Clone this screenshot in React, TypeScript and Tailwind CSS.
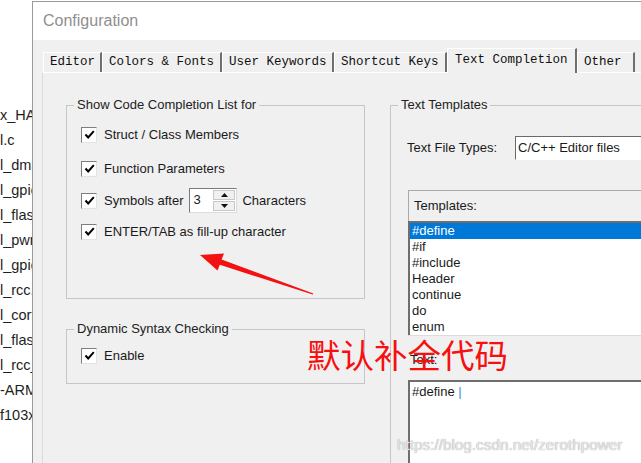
import React from 'react';

const files = [
  'x_HAL_Driver',
  'l.c',
  'l_dma.c',
  'l_gpio.c',
  'l_flash.c',
  'l_pwr.c',
  'l_gpio_ex.c',
  'l_rcc.c',
  'l_cortex.c',
  'l_flash_ex.c',
  'l_rcc_ex.c',
  '-ARM',
  'f103xb.s',
];

const tabs = [
  { label: 'Editor', width: 'w-[59px]' },
  { label: 'Colors & Fonts', width: 'w-[120px]' },
  { label: 'User Keywords', width: 'w-[112px]' },
  { label: 'Shortcut Keys', width: 'w-[113px]' },
  { label: 'Text Completion', width: 'w-[130px]', active: true },
  { label: 'Other', width: 'w-[58px]' },
];

const templates = ['#define', '#if', '#include', 'Header', 'continue', 'do', 'enum'];

function CheckBox() {
  return (
    <span className="flex h-[16px] w-[16px] shrink-0 items-center justify-center border border-t-[#7e7e7e] border-l-[#7e7e7e] border-r-[#e3e3e3] border-b-[#e3e3e3] bg-white">
      <svg width="11" height="10" viewBox="0 0 11 10">
        <path d="M1.5 4.5 L4.2 7.5 L9.8 1.2" fill="none" stroke="#000" strokeWidth="2" />
      </svg>
    </span>
  );
}

function Option({ children }: { children: React.ReactNode }) {
  return (
    <div className="flex h-[24px] items-center">
      <CheckBox />
      <span className="ml-[7px]">{children}</span>
    </div>
  );
}

function Spinner() {
  return (
    <div className="ml-[6px] flex h-[25px] w-[48px] border border-t-[#7a7a7a] border-l-[#7a7a7a] border-r-[#dcdcdc] border-b-[#dcdcdc] bg-white">
      <span className="flex-1 pl-[3px] leading-[22px]">3</span>
      <div className="my-px mr-px flex w-[22px] flex-col gap-px">
        <span className="flex flex-1 items-center justify-center border border-[#c8c8c8] bg-[#f0f0f0]">
          <svg width="7" height="4" viewBox="0 0 7 4"><path d="M3.5 0 L7 4 L0 4 Z" fill="#111" /></svg>
        </span>
        <span className="flex flex-1 items-center justify-center border border-[#c8c8c8] bg-[#f0f0f0]">
          <svg width="7" height="4" viewBox="0 0 7 4"><path d="M0 0 L7 0 L3.5 4 Z" fill="#111" /></svg>
        </span>
      </div>
    </div>
  );
}

export default function App() {
  return (
    <div className="relative flex h-[463px] w-[641px] overflow-hidden bg-white font-['Liberation_Sans',Arial,sans-serif] text-[13px] text-[#1a1a1a]">
      {/* project tree peeking out on the left */}
      <div className="w-[32px] shrink-0 overflow-hidden pt-[103px] text-[14.5px] text-[#1e1e1e]">
        {files.map((f, i) => (
          <div key={i} className="h-[25px] whitespace-nowrap leading-[25px]">
            {f}
          </div>
        ))}
      </div>

      <div className="mt-px flex min-h-0 flex-1 flex-col overflow-hidden border-l border-t border-[#9a9a9a]">
        <div className="flex h-[38px] shrink-0 items-center bg-white pl-[10px] text-[16px] text-[#8f8f8f]">
          Configuration
        </div>

        <div className="flex min-h-0 flex-1 flex-col overflow-hidden bg-[#f0f0f0] pl-[9px] pt-[8px]">
          {/* tabs */}
          <div className="flex h-[24px] shrink-0 items-end pl-px font-['Liberation_Mono',monospace] text-[12.5px] text-[#111]">
            {tabs.map((t) =>
              t.active ? (
                <div
                  key={t.label}
                  className={`relative z-10 -mb-px flex h-[25px] shrink-0 items-start border-l border-t border-r-2 border-l-white border-t-white border-r-[#6f6f6f] bg-[#f0f0f0] pl-[7px] pt-[2px] ${t.width}`}
                >
                  {t.label}
                </div>
              ) : (
                <div
                  key={t.label}
                  className={`flex h-[20px] shrink-0 items-center border-l border-t border-r-2 border-l-white border-t-white border-r-[#6f6f6f] bg-[#f0f0f0] pl-[6px] ${t.width}`}
                >
                  {t.label}
                </div>
              ),
            )}
          </div>

          {/* tab page */}
          <div className="flex min-h-0 flex-1 border-l border-t border-l-[#dadada] border-t-white">
            <div className="ml-[23px] mt-[24px] flex w-[299px] shrink-0 flex-col">
              <fieldset className="h-[202px] shrink-0 border border-[#c6c6c6]">
                <legend className="ml-[7px] px-[3px] leading-[16px] text-[#222]">Show Code Completion List for</legend>
                <div className="pl-[14px]">
                  <div className="mt-[10px]">
                    <Option>Struct / Class Members</Option>
                  </div>
                  <div className="mt-[10px]">
                    <Option>Function Parameters</Option>
                  </div>
                  <div className="mt-[7px] flex h-[25px] items-center">
                    <CheckBox />
                    <span className="ml-[7px]">Symbols after</span>
                    <Spinner />
                    <span className="ml-[5px]">Characters</span>
                  </div>
                  <div className="mt-[7px]">
                    <Option>ENTER/TAB as fill-up character</Option>
                  </div>
                </div>
              </fieldset>

              <fieldset className="mt-[22px] h-[63px] shrink-0 border border-[#c6c6c6]">
                <legend className="ml-[7px] px-[3px] leading-[16px] text-[#222]">Dynamic Syntax Checking</legend>
                <div className="mt-[7px] pl-[14px]">
                  <Option>Enable</Option>
                </div>
              </fieldset>
            </div>

            <fieldset className="ml-[25px] mt-[24px] h-[420px] w-[300px] shrink-0 border border-[#c6c6c6]">
              <legend className="ml-[7px] px-[3px] leading-[16px] text-[#222]">Text Templates</legend>
              <div className="pl-[16px]">
                <div className="mt-[23px] flex h-[24px] items-center">
                  <span className="w-[108px] shrink-0">Text File Types:</span>
                  <div className="flex h-[24px] flex-1 items-center border border-t-[#6a6a6a] border-l-[#6a6a6a] border-r-white border-b-white bg-white pl-[2px]">
                    C/C++ Editor files
                  </div>
                </div>

                <div className="ml-px mt-[30px] flex h-[31px] items-center border-l border-t border-[#a9a9a9] pl-[5px]">
                  Templates:
                </div>
                <div className="ml-px h-[114px] border-l-2 border-t-2 border-[#6e6e6e] bg-white">
                  {templates.map((t, i) => (
                    <div
                      key={t}
                      className={i === 0 ? 'h-[16px] bg-[#0078d7] pl-[2px] leading-[16px] text-white' : 'h-[16px] pl-[2px] leading-[16px]'}
                    >
                      {t}
                    </div>
                  ))}
                </div>
                <div className="ml-px flex h-[45px] items-center border-t border-[#dcdcdc] pl-[2px] pt-[4px]">Text:</div>
                <div className="ml-px h-[100px] border-l-2 border-t-2 border-[#6e6e6e] bg-white pl-[2px] pt-[2px] leading-[16px]">
                  #define <span className="text-[#3c8fd4]">|</span>
                </div>
              </div>
            </fieldset>
          </div>
        </div>
      </div>

      {/* annotation overlay */}
      <svg className="pointer-events-none absolute left-0 top-0" width="641" height="463" viewBox="0 0 641 463">
        <polygon
          points="200,255 224,253.5 221.6,259.6 313.3,293.4 312.7,294.6 219.8,264.8 217.5,270.5"
          fill="#f31212"
        />
      </svg>
      <div className="pointer-events-none absolute left-[307px] top-[337px] whitespace-nowrap font-['Noto_Sans_CJK_SC',sans-serif] text-[33.5px] leading-none text-[#f61010]">
        默认补全代码
      </div>
      <div className="pointer-events-none absolute left-[397px] top-[436px] whitespace-nowrap text-[15.3px] leading-[18px] text-[#e8e8e8] [text-shadow:0_0_1px_#8a8a8a]">
        https://blog.csdn.net/zerothpower
      </div>
    </div>
  );
}
